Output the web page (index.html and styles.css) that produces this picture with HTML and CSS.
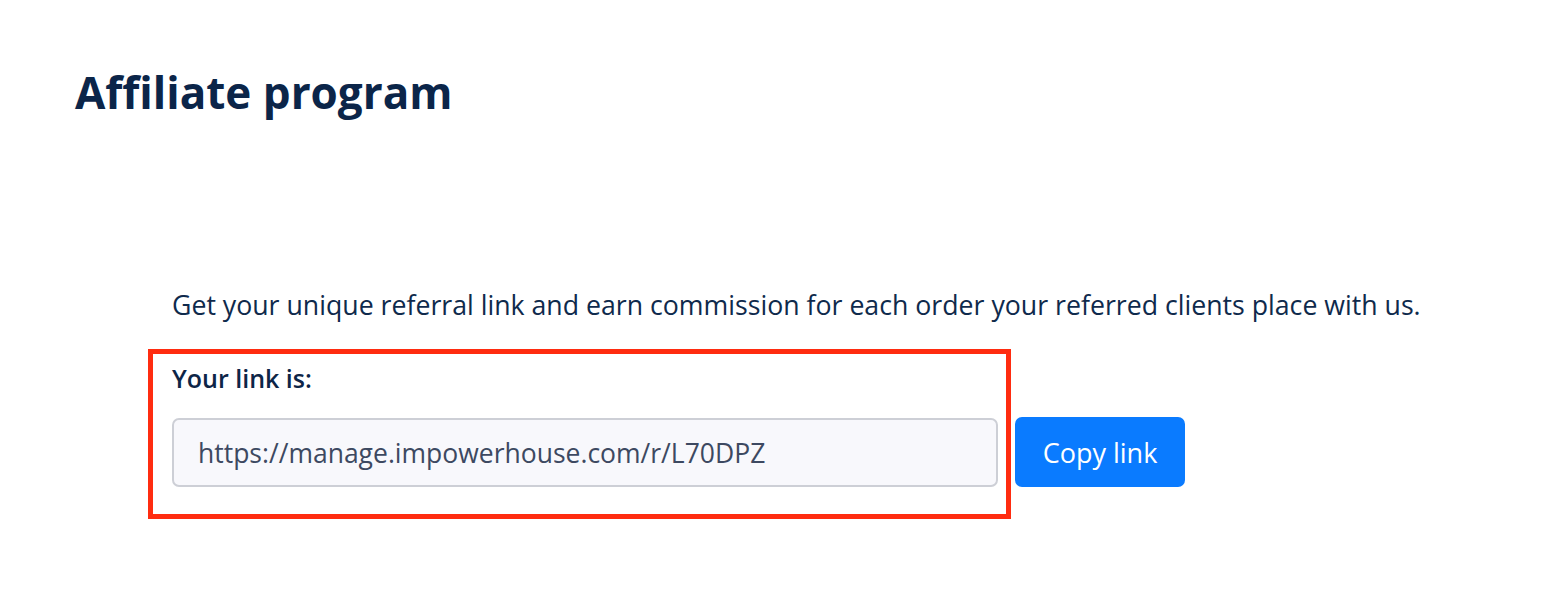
FILE: index.html
```html
<!DOCTYPE html>
<html lang="en">
<head>
<meta charset="utf-8">
<title>Affiliate program</title>
<link rel="stylesheet" href="styles.css">
</head>
<body>
<main class="page">
  <h1 class="title">Affiliate program</h1>
  <section class="affiliate">
    <p class="intro">Get your unique referral link and earn commission for each order your referred clients place with us.</p>
    <div class="link-row">
      <div class="highlight">
        <label class="label" for="ref">Your link is:</label>
        <input class="link-input" id="ref" type="text" value="https://manage.impowerhouse.com/r/L70DPZ" readonly>
      </div>
      <button class="copy-btn" type="button">Copy link</button>
    </div>
  </section>
</main>
</body>
</html>
```

FILE: styles.css
```css
html, body {
  margin: 0;
  padding: 0;
  background: #ffffff;
}

body {
  font-family: "Open Sans", Lato, sans-serif;
  color: #0d2547;
}

.page {
  padding: 62px 75px 0;
}

.title {
  margin: 0;
  font-size: 44px;
  line-height: 60px;
  font-weight: 700;
  color: #0b2549;
}

.affiliate {
  padding-left: 73px;
  margin-top: 167px;
}

.intro {
  margin: 0 0 28px 24px;
  font-size: 26.7px;
  line-height: 32px;
  white-space: nowrap;
  color: #0f2a4c;
}

.link-row {
  display: flex;
  align-items: flex-end;
  gap: 4px;
}

.highlight {
  width: 826px;
  border: 5px solid #ff2c10;
  padding: 9px 8px 27px 19px;
}

.label {
  display: block;
  font-size: 25px;
  line-height: 30px;
  font-weight: 600;
  color: #0d2547;
  margin-bottom: 25px;
}

.link-input {
  display: block;
  box-sizing: border-box;
  width: 826px;
  height: 69px;
  margin: 0;
  padding: 0 24px;
  border: 2px solid #cdcfd6;
  border-radius: 7px;
  background: #f8f8fc;
  font-family: "Open Sans", Lato, sans-serif;
  font-size: 26.5px;
  color: #3d4961;
  outline: none;
}

.copy-btn {
  box-sizing: border-box;
  width: 170px;
  height: 70px;
  margin: 0 0 32px;
  border: none;
  border-radius: 7px;
  background: #0a7bff;
  color: #ffffff;
  font-family: "Open Sans", Lato, sans-serif;
  font-size: 27px;
  cursor: pointer;
}
```
